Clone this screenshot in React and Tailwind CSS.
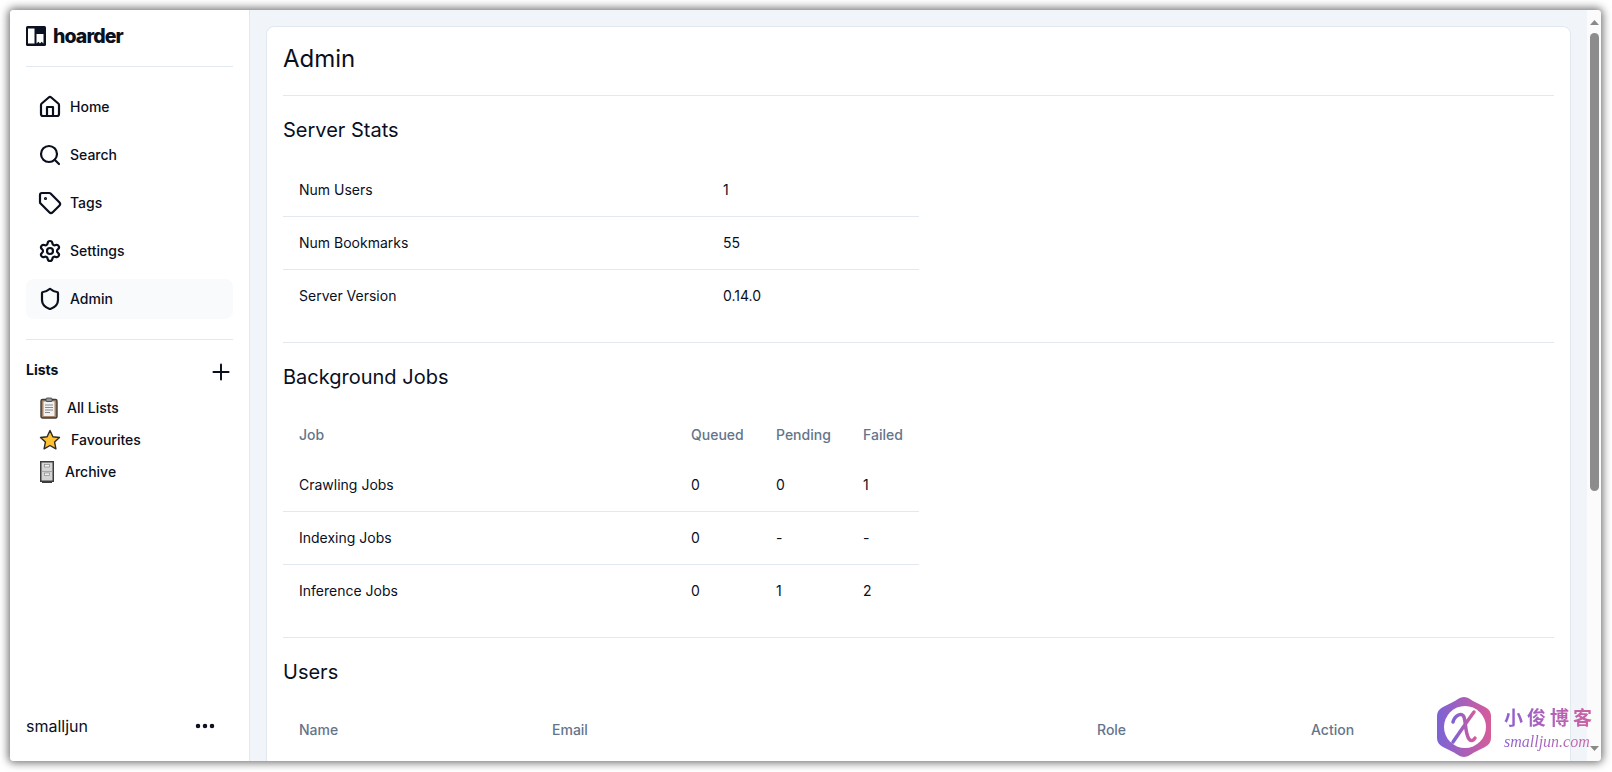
import { Search, Tag, Settings, Shield, Plus, Ellipsis } from "lucide-react";

function HomeIcon() {
  return (
    <svg width="24" height="24" viewBox="0 0 24 24" fill="none" stroke="currentColor" strokeWidth="2.200" strokeLinecap="round" strokeLinejoin="round">
      <path d="M3 10a2 2 0 0 1 .709-1.528l7-5.999a2 2 0 0 1 2.582 0l7 5.999A2 2 0 0 1 21 10v9a2 2 0 0 1-2 2H5a2 2 0 0 1-2-2z" />
      <path d="M9 21v-9h6v9" />
    </svg>
  );
}

const nav = [
  ["Home", HomeIcon],
  ["Search", Search],
  ["Tags", Tag],
  ["Settings", Settings],
  ["Admin", Shield],
];

function Clipboard() {
  return (
    <svg width="18" height="22" viewBox="0 0 18 22">
      <rect x="1" y="2.500" width="16" height="18.500" rx="1.500" fill="#a98467" stroke="#3f3a36" strokeWidth="1.400" />
      <rect x="3.500" y="4.500" width="11" height="14.500" fill="#f1f1f1" />
      <rect x="6" y="1" width="6" height="3.500" rx="1" fill="#8d99a3" stroke="#3f3a36" strokeWidth="0.800" />
      <path d="M5 8h8M5 10.500h8M5 13h8M5 15.500h5" stroke="#8b8b8b" strokeWidth="1" />
    </svg>
  );
}

function Star() {
  return (
    <svg width="22" height="22" viewBox="0 0 22 22">
      <path d="M11 1.500l2.900 6.200 6.600.8-4.900 4.600 1.300 6.700L11 16.500l-5.900 3.300 1.300-6.700L1.500 8.500l6.600-.8z" fill="#fdc132" stroke="#2d2a26" strokeWidth="1.400" strokeLinejoin="round" />
    </svg>
  );
}

function Cabinet() {
  return (
    <svg width="14" height="22" viewBox="0 0 14 22">
      <rect x="0.750" y="0.750" width="12.500" height="19.500" fill="#d4d4d4" stroke="#3c3c3c" strokeWidth="1.500" />
      <rect x="2" y="20" width="10" height="2" fill="#3c3c3c" />
      <path d="M1.500 10.500h11" stroke="#9a9a9a" strokeWidth="0.800" />
      <rect x="4.500" y="3.500" width="5" height="2.500" fill="#f1f1f1" stroke="#8a8a8a" strokeWidth="0.700" />
      <rect x="4.500" y="12" width="5" height="2.500" fill="#f1f1f1" stroke="#8a8a8a" strokeWidth="0.700" />
    </svg>
  );
}

function Logo() {
  return (
    <svg width="20" height="20" viewBox="0 0 20 20" className="shrink-0">
      <rect width="20" height="20" rx="1.500" fill="#0b1120" />
      <rect x="2" y="2.500" width="6.500" height="15" fill="#fff" />
      <path d="M10.500 8h7v9.500l-1.900-1.700-1.600 1.700-1.600-1.700-1.900 1.700z" fill="#fff" />
    </svg>
  );
}

function WaterMark() {
  return (
    <div className="absolute left-[1436px] top-[696px] flex items-center gap-[12px]">
      <svg width="56" height="62" viewBox="0 0 56 62">
        <defs>
          <linearGradient id="wm" x1="0" y1="0" x2="1" y2="0">
            <stop offset="0" stopColor="#7b63d6" />
            <stop offset="1" stopColor="#d65c9a" />
          </linearGradient>
        </defs>
        <path d="M28 1c4 0 7 3 11 5l10 5c4 2 6 5 6 9v22c0 4-2 7-6 9l-10 5c-4 2-7 5-11 5s-7-3-11-5L7 51c-4-2-6-5-6-9V20c0-4 2-7 6-9l10-5c4-2 7-5 11-5z" fill="url(#wm)" />
        <circle cx="29" cy="31" r="21" fill="#fff" />
        <path d="M17 26c2-7 9-10 11-5 2 6 1 16 5 22 2 3 5 1 6-1M38 16c-6 8-14 20-21 30" fill="none" stroke="url(#wm)" strokeWidth="3.500" strokeLinecap="round" />
      </svg>
      <div className="flex w-[88px] flex-col items-start">
        <span className="bg-linear-to-r from-[#8f5fd0] to-[#d0609f] bg-clip-text text-[19px] leading-[26px] font-bold tracking-[4px] whitespace-nowrap text-transparent [font-family:'Noto_Sans_CJK_SC',sans-serif]">小俊博客</span>
        <span className="mt-[3px] bg-linear-to-r from-[#8f5fd0] to-[#c868a8] bg-clip-text text-[16px] leading-[18px] whitespace-nowrap italic text-transparent [font-family:'Liberation_Serif',serif]">smalljun.com</span>
      </div>
    </div>
  );
}

function Heading({ children }) {
  return <h2 className="text-xl leading-[28px] text-[#0a0f1e]">{children}</h2>;
}

export default function App() {
  return (
    <div className="relative h-[772px] w-[1612px] overflow-hidden bg-white p-[10px] font-['Inter',sans-serif] text-[#0a0f1e]">
      <div className="flex h-[751px] w-[1591px] overflow-hidden rounded-[4px] bg-white shadow-[0_0_8px_2px_rgba(0,0,0,0.55)]">
        <aside className="flex h-full w-[240px] shrink-0 flex-col border-r border-[#e2e8f0] bg-white px-[16px]">
          <div className="flex h-[57px] shrink-0 items-start gap-[7px] border-b border-[#e2e8f0] pt-[16px]">
            <Logo />
            <span className="text-[19.500px] leading-[20px] font-extrabold tracking-[-0.900px] text-[#0b1120]">hoarder</span>
          </div>
          <nav className="mt-[20px] flex flex-col gap-[8px]">
            {nav.map(([label, Icon]) => (
              <div key={label} className={`flex h-[40px] items-center gap-[8px] rounded-lg pl-[12px] text-sm font-medium ${label === "Admin" ? "bg-[#f8fafc]" : ""}`}>
                <Icon size={24} strokeWidth={2.200} />
                <span>{label}</span>
              </div>
            ))}
          </nav>
          <div className="mt-[20px] border-t border-[#e2e8f0]" />
          <div className="mt-[18px] flex h-[24px] items-center justify-between">
            <span className="text-sm font-bold">Lists</span>
            <Plus size={26} strokeWidth={1.800} className="-mr-[1px] mt-[4px]" />
          </div>
          <div className="mt-[10px] flex flex-col text-sm font-medium">
            <div className="flex h-[32px] items-center gap-[9px] pl-[14px]"><Clipboard /><span>All Lists</span></div>
            <div className="flex h-[32px] items-center gap-[10px] pl-[13px]"><Star /><span>Favourites</span></div>
            <div className="flex h-[32px] items-center gap-[11px] pl-[14px]"><Cabinet /><span>Archive</span></div>
          </div>
          <div className="mt-auto flex h-[52px] items-start justify-between pt-[5px] pr-[16px]">
            <span className="text-base leading-[24px]">smalljun</span>
            <Ellipsis size={24} strokeWidth={2.500} />
          </div>
        </aside>

        <main className="h-full flex-1 overflow-hidden bg-[#f1f5f9] pt-[16px] pl-[16px]">
          <section className="h-[900px] w-[1305px] rounded-lg border border-[#e2e8f0] bg-white px-[16px] pt-[16px]">
            <h1 className="text-2xl leading-[32px]">Admin</h1>
            <hr className="mt-[20px] border-[#e2e8f0]" />
            <div className="mt-[20px]"><Heading>Server Stats</Heading></div>
            <table className="mt-[20px] w-[636px] table-fixed text-sm">
              <colgroup><col className="w-[424px]" /><col /></colgroup>
              <tbody>
                {[["Num Users", "1"], ["Num Bookmarks", "55"], ["Server Version", "0.14.0"]].map(([a, b], i) => (
                  <tr key={a} className={i < 2 ? "border-b border-[#e2e8f0]" : ""}>
                    <td className="p-[16px]">{a}</td>
                    <td className="p-[16px]">{b}</td>
                  </tr>
                ))}
              </tbody>
            </table>
            <hr className="mt-[20px] border-[#e2e8f0]" />
            <div className="mt-[20px]"><Heading>Background Jobs</Heading></div>
            <table className="mt-[20px] w-[636px] table-fixed text-sm">
              <colgroup><col className="w-[392px]" /><col className="w-[85px]" /><col className="w-[87px]" /><col /></colgroup>
              <thead>
                <tr className="h-[48px] text-left text-[#64748b]">
                  {["Job", "Queued", "Pending", "Failed"].map((h) => <th key={h} className="px-[16px] font-medium">{h}</th>)}
                </tr>
              </thead>
              <tbody>
                {[["Crawling Jobs", "0", "0", "1"], ["Indexing Jobs", "0", "-", "-"], ["Inference Jobs", "0", "1", "2"]].map((r, i) => (
                  <tr key={r[0]} className={i < 2 ? "border-b border-[#e2e8f0]" : ""}>
                    {r.map((c, j) => <td key={j} className="p-[16px]">{c}</td>)}
                  </tr>
                ))}
              </tbody>
            </table>
            <hr className="mt-[20px] border-[#e2e8f0]" />
            <div className="mt-[20px]"><Heading>Users</Heading></div>
            <table className="mt-[20px] w-[1272px] table-fixed text-sm">
              <colgroup><col className="w-[253px]" /><col className="w-[545px]" /><col className="w-[214px]" /><col /></colgroup>
              <thead>
                <tr className="h-[48px] text-left text-[#64748b]">
                  {["Name", "Email", "Role", "Action"].map((h) => <th key={h} className="px-[16px] font-medium">{h}</th>)}
                </tr>
              </thead>
            </table>
          </section>
        </main>

        <div className="flex h-full w-[14px] shrink-0 flex-col items-center bg-[#fbfbfb]">
          <svg width="9" height="5" viewBox="0 0 9 5" className="mt-[10px] shrink-0"><path d="M4.500 0L9 5H0z" fill="#8a8a8a" /></svg>
          <div className="mt-[8px] h-[458px] w-[9px] shrink-0 rounded-full bg-[#8c8c8c]" />
          <svg width="9" height="5" viewBox="0 0 9 5" className="mt-auto mb-[10px] shrink-0"><path d="M0 0h9L4.500 5z" fill="#8a8a8a" /></svg>
        </div>
      </div>
      <WaterMark />
    </div>
  );
}
